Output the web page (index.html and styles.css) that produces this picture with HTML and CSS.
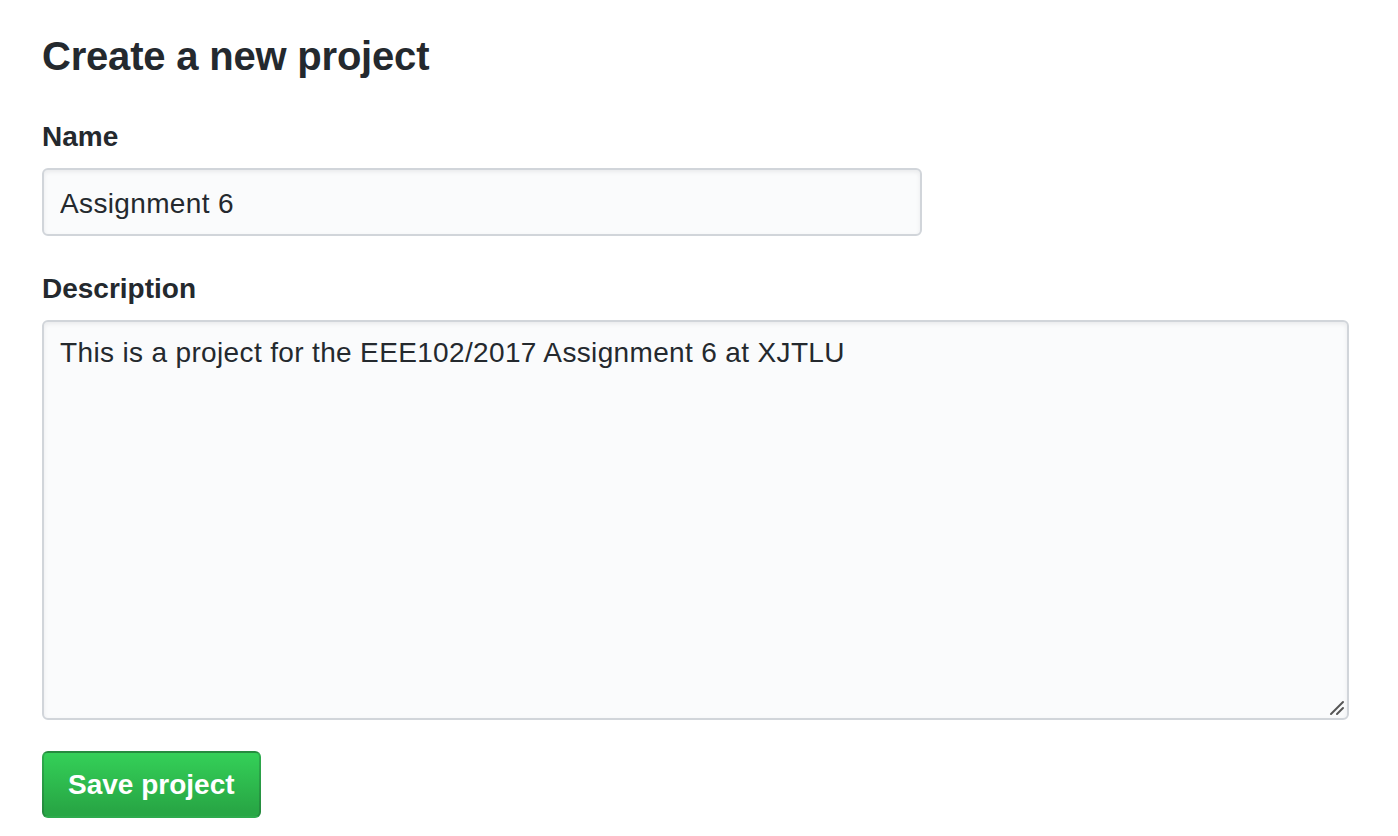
FILE: index.html
```html
<!DOCTYPE html>
<html lang="en">
<head>
<meta charset="utf-8">
<title>Create a new project</title>
<link rel="stylesheet" href="styles.css">
</head>
<body>
<main class="page">
  <h2 class="heading">Create a new project</h2>
  <form class="form">
    <div class="group group-name">
      <label class="label" for="name">Name</label>
      <input class="field input" id="name" type="text" value="Assignment 6">
    </div>
    <div class="group group-desc">
      <label class="label" for="desc">Description</label>
      <div class="textarea-wrap">
        <textarea class="field textarea" id="desc">This is a project for the EEE102/2017 Assignment 6 at XJTLU</textarea>
        <svg class="grip" width="16" height="16" viewBox="0 0 16 16" aria-hidden="true">
          <line x1="2" y1="14" x2="14" y2="2" stroke="#555" stroke-width="2" stroke-linecap="round"/>
          <line x1="8" y1="14" x2="14" y2="8" stroke="#555" stroke-width="2" stroke-linecap="round"/>
        </svg>
      </div>
    </div>
    <button class="btn" type="button">Save project</button>
  </form>
</main>
</body>
</html>
```

FILE: styles.css
```css
* { box-sizing: border-box; }
html, body { margin: 0; padding: 0; background: #fff; }
body {
  font-family: "Liberation Sans", Arial, sans-serif;
  color: #24292e;
}
.page {
  padding: 32px 0 0 42px;
}
.heading {
  margin: 0;
  font-size: 40px;
  line-height: 48px;
  font-weight: 700;
  letter-spacing: -0.2px;
}
.form {
  display: flex;
  flex-direction: column;
  align-items: flex-start;
}
.group {
  display: flex;
  flex-direction: column;
}
.group-name { margin-top: 39px; }
.group-desc { margin-top: 35px; }
.label {
  font-size: 28px;
  line-height: 36px;
  font-weight: 700;
  margin-bottom: 13px;
}
.field {
  font-family: inherit;
  font-size: 28px;
  letter-spacing: 0.35px;
  color: #24292e;
  background: #fafbfc;
  border: 2px solid #d1d5da;
  border-radius: 6px;
  box-shadow: inset 0 2px 4px rgba(27, 31, 35, 0.075);
  outline: none;
  margin: 0;
}
.input {
  width: 880px;
  height: 68px;
  padding: 3px 16px 0;
  line-height: 40px;
}
.textarea-wrap {
  position: relative;
  width: 1307px;
  height: 400px;
}
.textarea {
  display: block;
  width: 100%;
  height: 100%;
  padding: 11px 16px;
  line-height: 40px;
  resize: none;
}
.grip {
  position: absolute;
  right: 4px;
  bottom: 4px;
}
.btn {
  margin-top: 31px;
  height: 67px;
  padding: 0 24px;
  display: inline-flex;
  align-items: center;
  font-family: inherit;
  font-size: 28px;
  line-height: 40px;
  font-weight: 700;
  color: #fff;
  background: linear-gradient(#34d058, #28a745 90%);
  border: 2px solid rgba(27, 31, 35, 0.2);
  border-radius: 6px;
  cursor: pointer;
}
```
